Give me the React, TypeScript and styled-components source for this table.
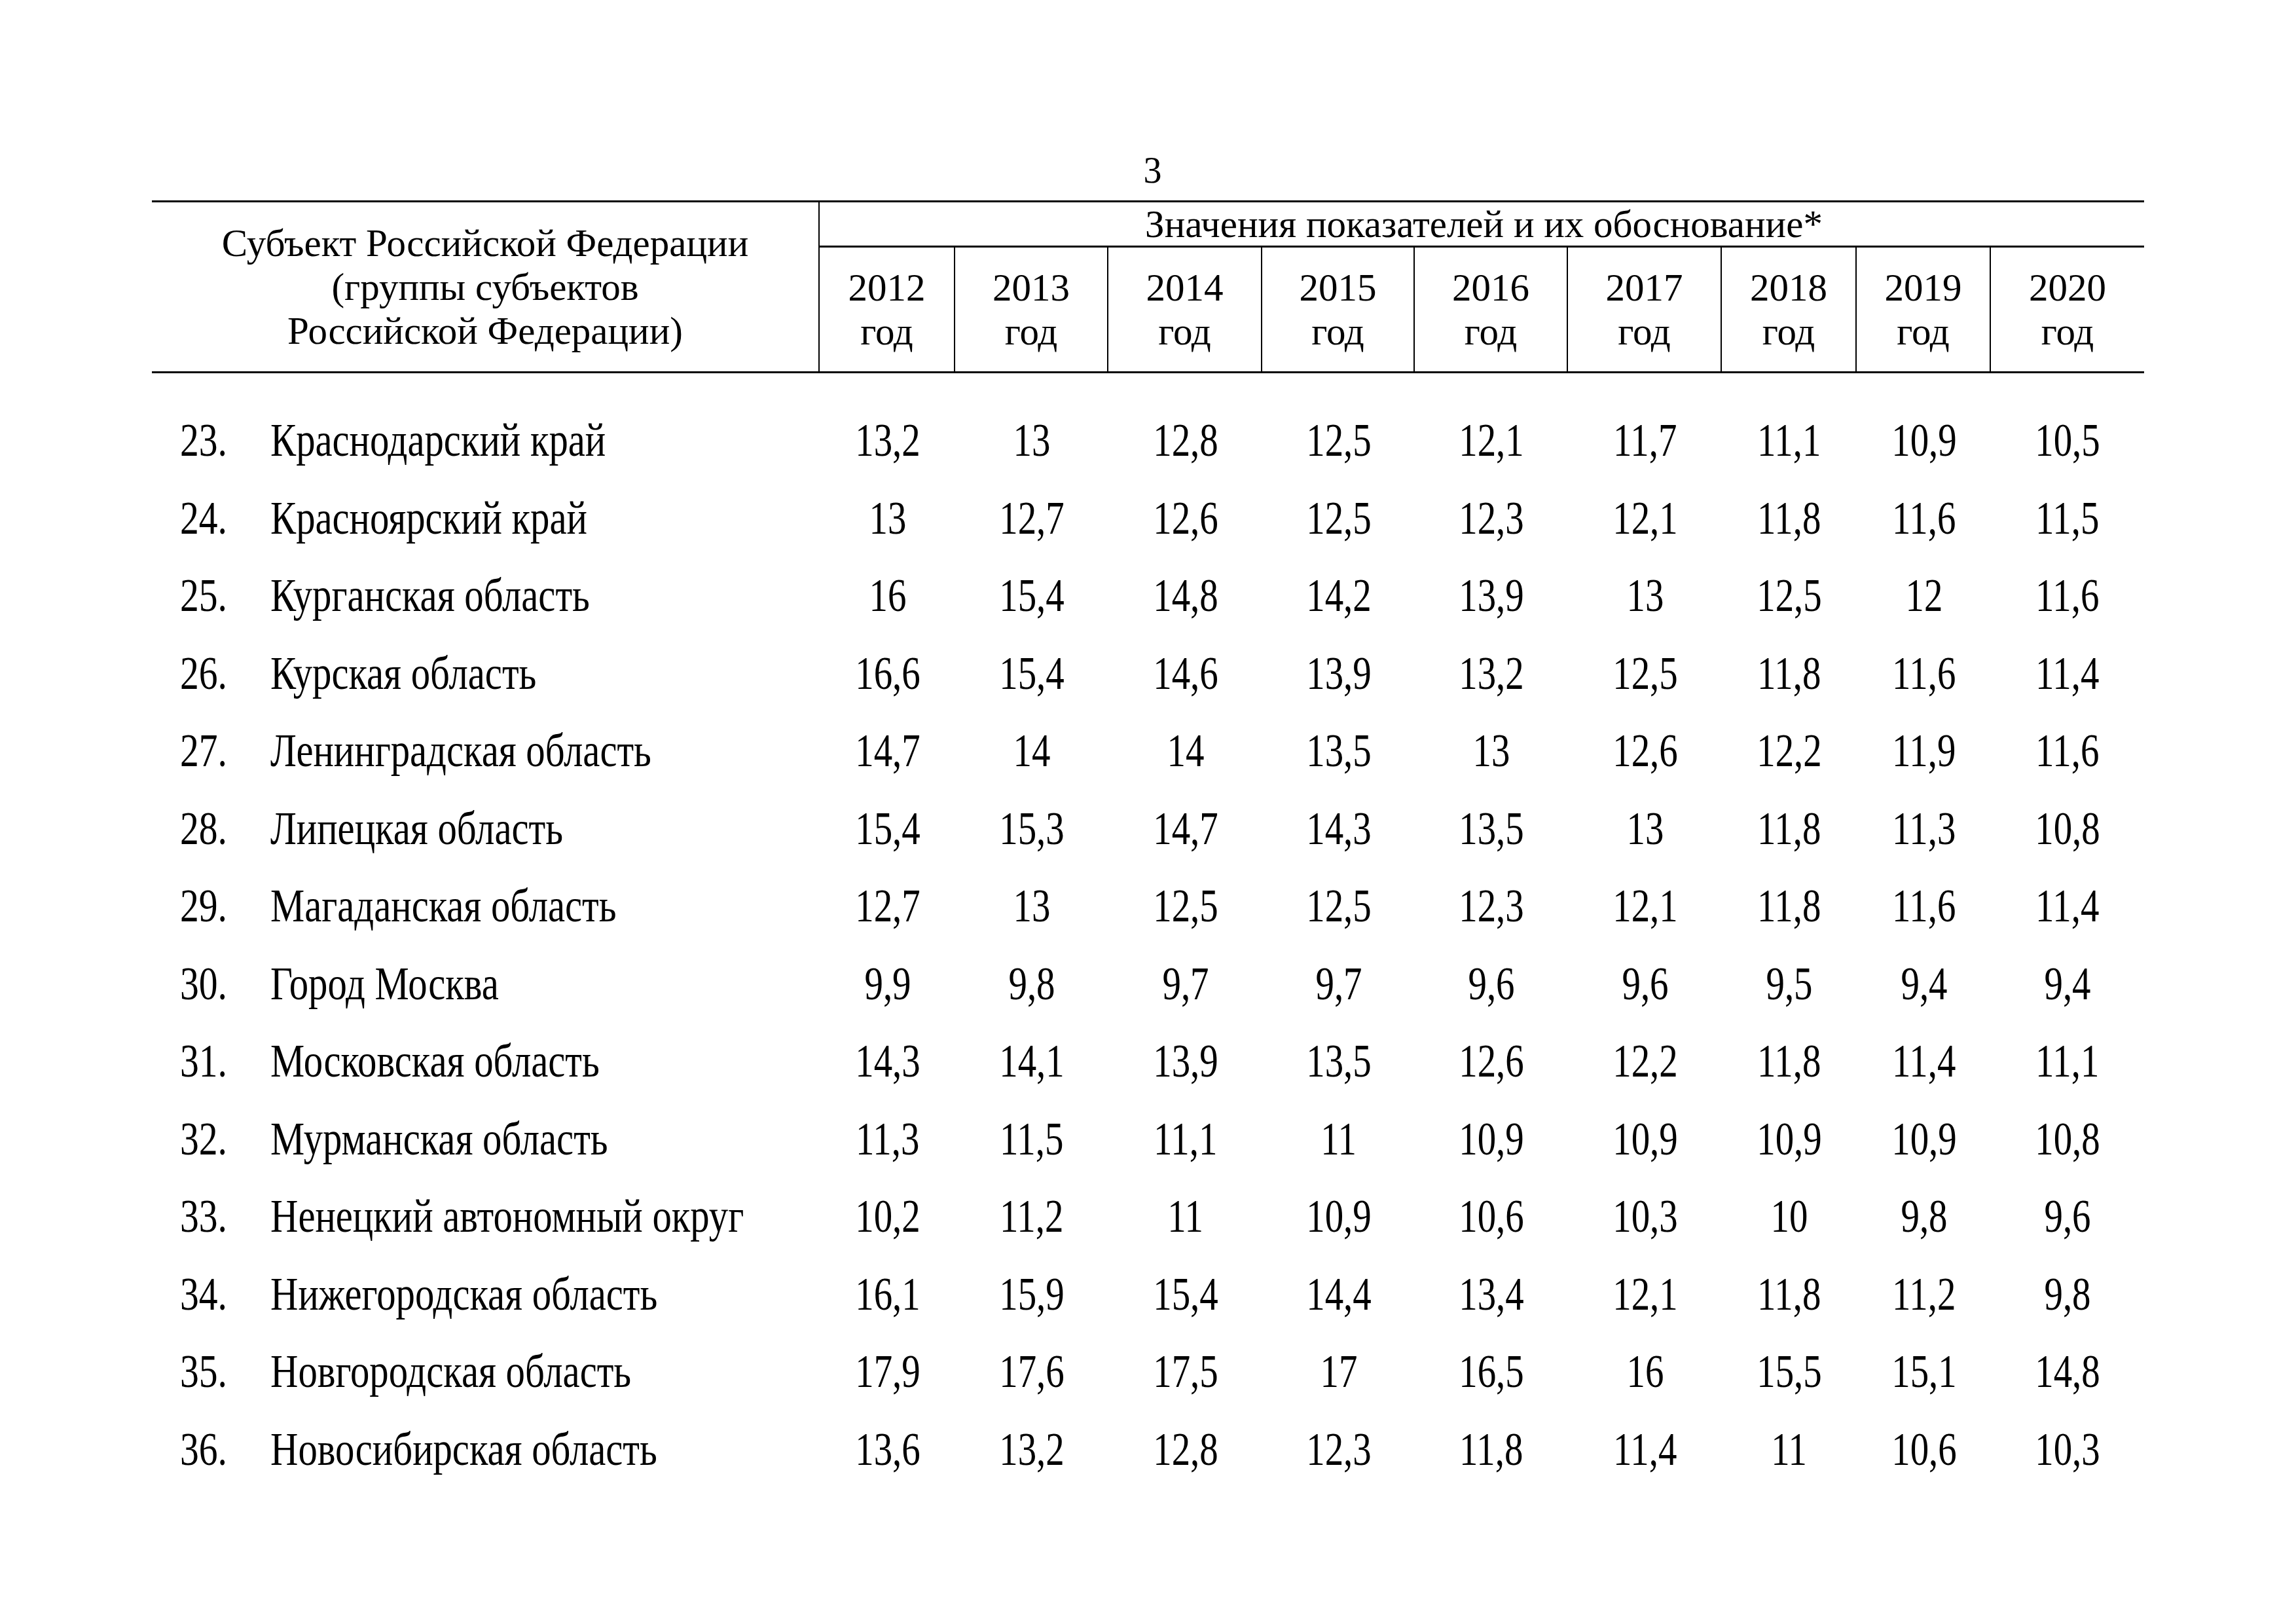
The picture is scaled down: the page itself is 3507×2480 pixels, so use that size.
import * as React from 'react';
import styled, { createGlobalStyle } from 'styled-components';

const GlobalStyle = createGlobalStyle`
	html, body {
		margin: 0;
		padding: 0;
		background: #ffffff;
	}
	body {
		font-family: "Liberation Serif", "Times New Roman", serif;
		color: #000000;
	}
`;

const yearColumns = [207, 234, 235, 233, 234, 235, 206, 205, 234];
const subjectWidth = 1020;
const years = ['2012', '2013', '2014', '2015', '2016', '2017', '2018', '2019', '2020'];

interface RowData {
	num: string;
	name: string;
	values: string[];
}

const rows: RowData[] = [
	{ num: '23.', name: 'Краснодарский край', values: ['13,2', '13', '12,8', '12,5', '12,1', '11,7', '11,1', '10,9', '10,5'] },
	{ num: '24.', name: 'Красноярский край', values: ['13', '12,7', '12,6', '12,5', '12,3', '12,1', '11,8', '11,6', '11,5'] },
	{ num: '25.', name: 'Курганская область', values: ['16', '15,4', '14,8', '14,2', '13,9', '13', '12,5', '12', '11,6'] },
	{ num: '26.', name: 'Курская область', values: ['16,6', '15,4', '14,6', '13,9', '13,2', '12,5', '11,8', '11,6', '11,4'] },
	{ num: '27.', name: 'Ленинградская область', values: ['14,7', '14', '14', '13,5', '13', '12,6', '12,2', '11,9', '11,6'] },
	{ num: '28.', name: 'Липецкая область', values: ['15,4', '15,3', '14,7', '14,3', '13,5', '13', '11,8', '11,3', '10,8'] },
	{ num: '29.', name: 'Магаданская область', values: ['12,7', '13', '12,5', '12,5', '12,3', '12,1', '11,8', '11,6', '11,4'] },
	{ num: '30.', name: 'Город Москва', values: ['9,9', '9,8', '9,7', '9,7', '9,6', '9,6', '9,5', '9,4', '9,4'] },
	{ num: '31.', name: 'Московская область', values: ['14,3', '14,1', '13,9', '13,5', '12,6', '12,2', '11,8', '11,4', '11,1'] },
	{ num: '32.', name: 'Мурманская область', values: ['11,3', '11,5', '11,1', '11', '10,9', '10,9', '10,9', '10,9', '10,8'] },
	{ num: '33.', name: 'Ненецкий автономный округ', values: ['10,2', '11,2', '11', '10,9', '10,6', '10,3', '10', '9,8', '9,6'] },
	{ num: '34.', name: 'Нижегородская область', values: ['16,1', '15,9', '15,4', '14,4', '13,4', '12,1', '11,8', '11,2', '9,8'] },
	{ num: '35.', name: 'Новгородская область', values: ['17,9', '17,6', '17,5', '17', '16,5', '16', '15,5', '15,1', '14,8'] },
	{ num: '36.', name: 'Новосибирская область', values: ['13,6', '13,2', '12,8', '12,3', '11,8', '11,4', '11', '10,6', '10,3'] },
];

const yearTemplate = yearColumns.map(w => `${w}px`).join(' ');

const Page = styled.div`
	width: 3043px;
	padding: 222px 0 200px 232px;
`;

const PageNumber = styled.div`
	text-align: center;
	font-size: 56px;
	line-height: 60px;
	height: 60px;
	padding-top: 8px;
	margin-bottom: 16px;
	padding-left: 14px;
`;

const Table = styled.div`
	border-top: 3px solid #000;
`;

const HeaderGrid = styled.div`
	display: grid;
	grid-template-columns: ${subjectWidth}px ${yearTemplate};
	grid-template-rows: 69px 189px;
	border-bottom: 3px solid #000;
	font-size: 59px;
	line-height: 67px;
`;

const SubjectHead = styled.div`
	grid-row: 1 / span 2;
	grid-column: 1;
	border-right: 2px solid #000;
	display: flex;
	align-items: center;
	justify-content: center;
	text-align: center;
`;

const ValuesHead = styled.div`
	grid-row: 1;
	grid-column: 2 / span 9;
	border-bottom: 3px solid #000;
	text-align: center;
	line-height: 66px;
	padding-left: 6px;
`;

const YearHead = styled.div<{ $last?: boolean }>`
	grid-row: 2;
	border-right: ${p => (p.$last ? 'none' : '2px solid #000')};
	display: flex;
	flex-direction: column;
	align-items: center;
	justify-content: center;
	text-align: center;
`;

const Body = styled.div`
	padding-top: 43px;
`;

const Row = styled.div`
	display: grid;
	grid-template-columns: 181px ${subjectWidth - 181}px ${yearTemplate};
	height: 118.5px;
	align-items: center;
	font-size: 72px;
	line-height: 118.5px;
`;

const NumCell = styled.div`
	padding-left: 43px;
	white-space: nowrap;
`;

const NameCell = styled.div`
	white-space: nowrap;
`;

const ValueCell = styled.div`
	text-align: center;
	white-space: nowrap;
`;

const Narrow = styled.span<{ $origin: string; $scale: number }>`
	display: inline-block;
	transform: scaleX(${p => p.$scale});
	transform-origin: ${p => p.$origin} center;
`;

export default function App() {
	return (
		<>
			<GlobalStyle />
			<Page>
				<PageNumber>3</PageNumber>
				<Table>
					<HeaderGrid>
						<SubjectHead>
							Субъект Российской Федерации<br />
							(группы субъектов<br />
							Российской Федерации)
						</SubjectHead>
						<ValuesHead>Значения показателей и их обоснование*</ValuesHead>
						{years.map((y, i) => (
							<YearHead key={y} $last={i === years.length - 1} style={{ gridColumn: i + 2 }}>
								<span>{y}</span>
								<span>год</span>
							</YearHead>
						))}
					</HeaderGrid>
					<Body>
						{rows.map(r => (
							<Row key={r.num}>
								<NumCell><Narrow $origin="left" $scale={0.8}>{r.num}</Narrow></NumCell>
								<NameCell><Narrow $origin="left" $scale={0.815}>{r.name}</Narrow></NameCell>
								{r.values.map((v, i) => (
									<ValueCell key={i}><Narrow $origin="center" $scale={0.79}>{v}</Narrow></ValueCell>
								))}
							</Row>
						))}
					</Body>
				</Table>
			</Page>
		</>
	);
}
